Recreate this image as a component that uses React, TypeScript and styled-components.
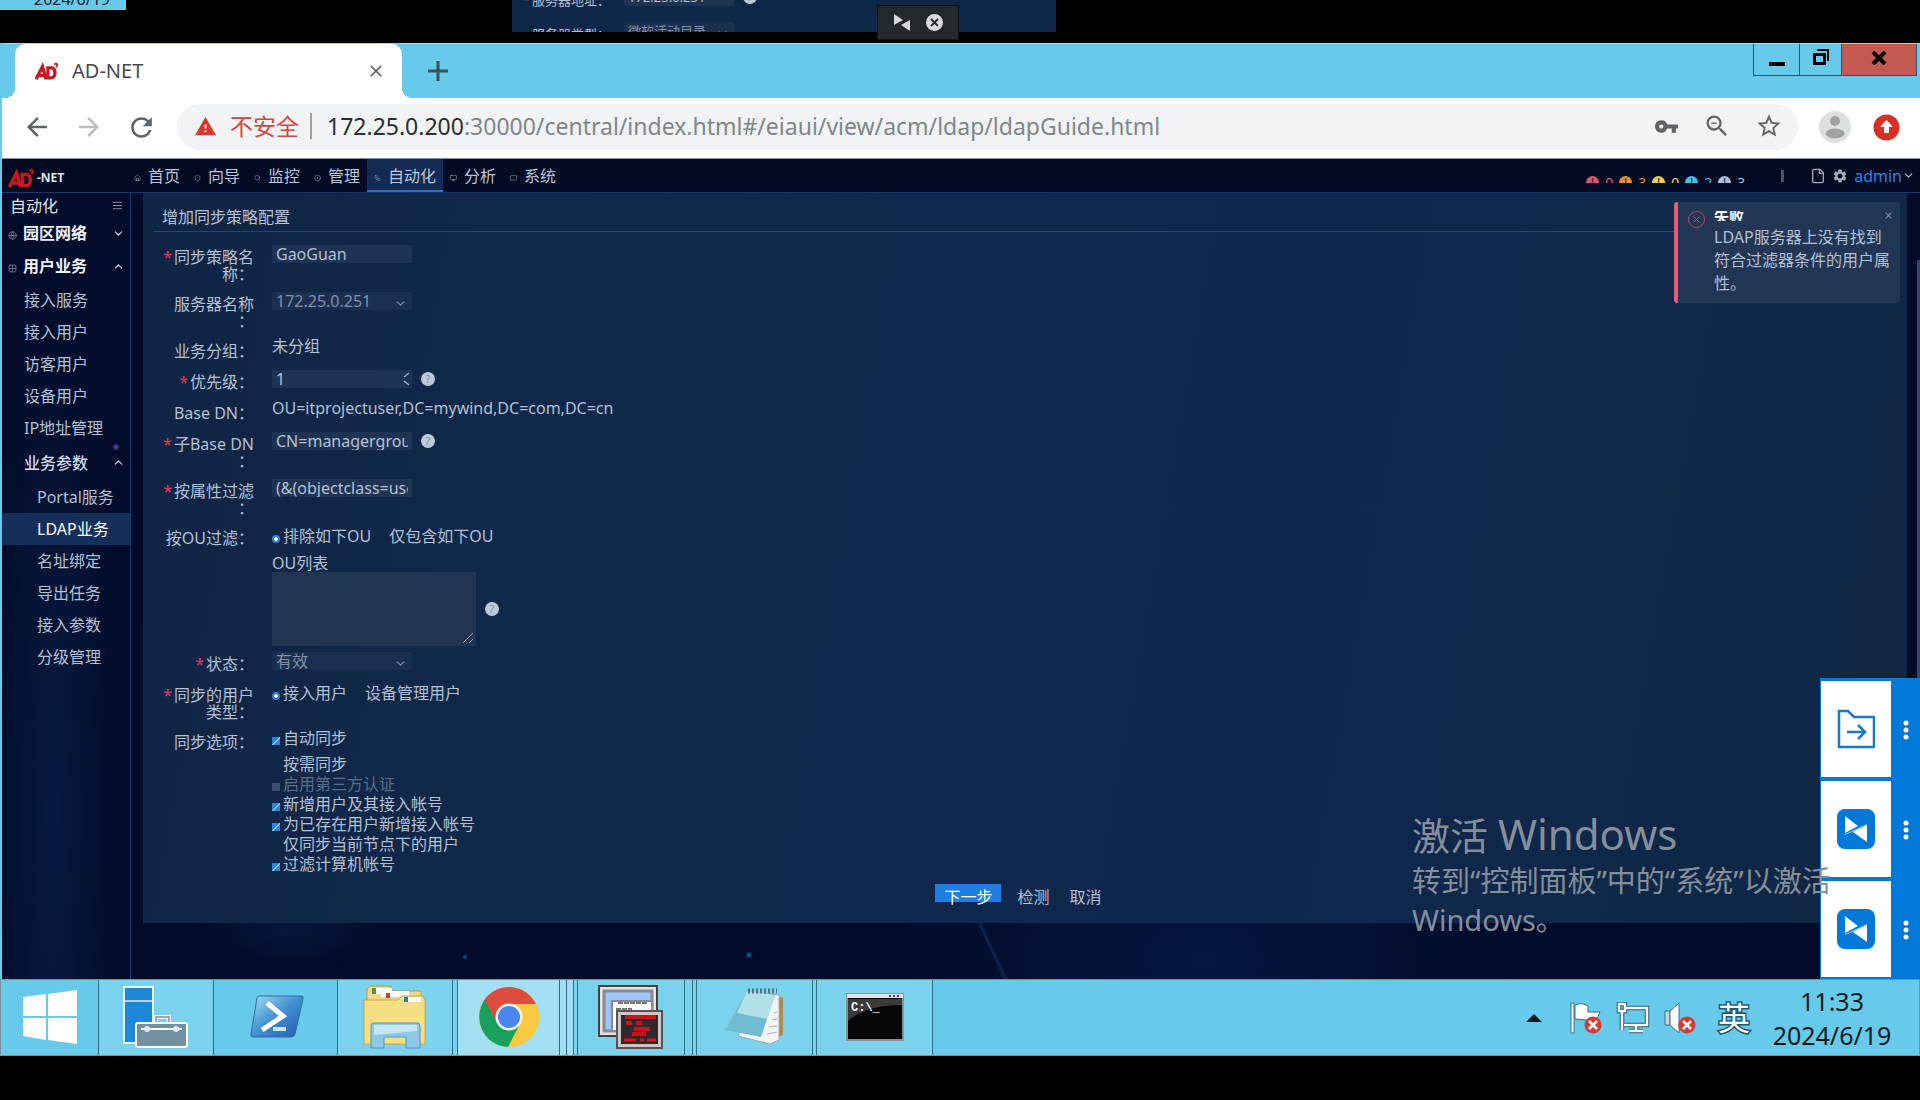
import React from "react";
import styled, { createGlobalStyle, css } from "styled-components";
import {
  MdArrowBack,
  MdArrowForward,
  MdRefresh,
  MdWarning,
  MdVpnKey,
  MdZoomOut,
  MdStarBorder,
  MdClose,
  MdSettings,
} from "react-icons/md";
import { ChevronDown, ChevronUp, File, House, Shield, Monitor, CircleDot, Workflow, MessageSquare, Search, Globe, Grid2x2, AlignJustify } from "lucide-react";

const sky = "#67caea";
const edge = "#2b6f86";
const ink = "#b4c0d4";

const GlobalStyle = createGlobalStyle`
  * { box-sizing: border-box; }
  body {
    margin: 0;
    background: #000;
    font-family: "Noto Sans", "Noto Sans CJK SC", sans-serif;
    font-size: 16px;
    line-height: 18px;
  }
  button, input, select, textarea { font: inherit; color: inherit; border: 0; border-radius: 0; margin: 0; padding: 0; background: none; }
  a { color: inherit; text-decoration: none; }
  svg { display: block; flex: none; }
`;

const Desktop = styled.div`
  min-height: 100vh;
  display: flex;
  flex-direction: column;
  background: #000;
  overflow: hidden;
`;

/* ---------- browser chrome ---------- */
const Browser = styled.div`
  flex: 1;
  display: flex;
  flex-direction: column;
  border-left: 2px solid ${sky};
  background: #fff;
`;
const TabStrip = styled.div`
  display: flex;
  height: 55px;
  padding-left: 13px;
  background: ${sky};
  border-top: 1px solid #93dcf3;
`;
const Tab = styled.div`
  position: relative;
  width: 387px;
  display: flex;
  align-items: center;
  padding: 0 16px 0 19px;
  border-radius: 10px 10px 0 0;
  background: #fff;
  color: #45494d;
  font-size: 20px;
  &::before, &::after {
    content: "";
    position: absolute;
    bottom: 0;
    width: 10px;
    height: 10px;
  }
  &::before { left: -10px; background: radial-gradient(circle at 0 0, transparent 10px, #fff 10px); }
  &::after { right: -10px; background: radial-gradient(circle at 100% 0, transparent 10px, #fff 10px); }
`;
const TabTitle = styled.span`
  flex: 1;
  margin-left: 12px;
`;
const IconButton = styled.button<{ $color?: string }>`
  display: flex;
  align-items: center;
  justify-content: center;
  color: ${(p) => p.$color ?? "#5f6368"};
`;
const NewTab = styled(IconButton)`
  margin-left: 26px;
  padding-bottom: 1px;
`;
const WindowButtons = styled.div`
  display: flex;
  margin-left: auto;
  margin-right: 3px;
  height: 32px;
  border: 1px solid #1c5a70;
  border-top: 0;
`;
const WindowButton = styled.button<{ $w: number; $close?: boolean }>`
  width: ${(p) => p.$w}px;
  display: flex;
  align-items: center;
  justify-content: center;
  padding-bottom: 4px;
  background: ${(p) => (p.$close ? "#c35a51" : sky)};
  & + & { border-left: 1px solid #1c5a70; }
`;
const Toolbar = styled.div`
  display: flex;
  align-items: center;
  height: 61px;
  padding: 0 20px 2px;
  border-bottom: 1px solid #8b8f96;
`;
const NavTools = styled.div`
  display: flex;
  gap: 22px;
`;
const Omnibox = styled.div`
  flex: 1;
  height: 46px;
  display: flex;
  align-items: center;
  margin: 0 21px 0 20px;
  padding: 0 15px 2px 17px;
  border-radius: 23px;
  background: #f1f3f4;
  font-size: 23px;
  line-height: 30px;
  color: #80868b;
`;
const Insecure = styled.span`
  margin-left: 13px;
  color: #d8453c;
`;
const Bar = styled.span`
  width: 2px;
  height: 26px;
  margin: 0 15px 0 11px;
  background: #9a9fa4;
`;
const Address = styled.span`
  flex: 1;
  white-space: nowrap;
  b { font-weight: 400; color: #2a2d31; }
`;
const OmniTools = styled.div`
  display: flex;
  gap: 24px;
`;
const ProfileTools = styled.div`
  display: flex;
  align-items: center;
  gap: 22px;
`;

/* ---------- web application ---------- */
const AppArea = styled.div`
  position: relative;
  flex: 1;
  display: flex;
  flex-direction: column;
  color: ${ink};
  background:
    linear-gradient(65deg, transparent 49%, rgba(40, 90, 150, 0.3) 50%, transparent 52%) 900px 100% / 180px 56px no-repeat,
    radial-gradient(circle at 463px 798px, #1c5f96 0, transparent 3px),
    radial-gradient(circle at 747px 796px, #1c6a98 0, transparent 4px),
    radial-gradient(ellipse at 290px 770px, rgba(16, 62, 120, 0.25) 0, transparent 90px),
    radial-gradient(ellipse at 1200px 800px, rgba(10, 50, 110, 0.3) 0, transparent 320px),
    #020b2a;
`;
const AppNav = styled.nav`
  display: flex;
  height: 34px;
  align-items: stretch;
  padding: 0 5px 0 4px;
  background: #020a24;
  border-bottom: 1px solid #16386f;
`;
const Brand = styled.a`
  display: flex;
  width: 121px;
  align-items: center;
  color: #dfe4ee;
  font-size: 12px;
  font-weight: 700;
  padding-top: 4px;
`;
const NavLink = styled.a<{ $active?: boolean }>`
  display: flex;
  align-items: center;
  gap: 7px;
  padding: 0 7px;
  color: #bcc6d8;
  white-space: nowrap;
  svg { width: 7px; color: #8d98b0; margin-top: 5px; }
  ${(p) =>
    p.$active &&
    css`
      background: #132a55;
      box-shadow: inset 0 -2px 0 #2a72c8;
    `}
`;
const NavRight = styled.div`
  display: flex;
  align-items: center;
  margin-left: auto;
`;
const Alarms = styled.div`
  display: flex;
  gap: 6px;
  height: 7px;
  margin: 7px 36px 0 0;
  overflow: hidden;
`;
const Alarm = styled.span<{ $c: string }>`
  display: flex;
  width: 27px;
  gap: 6px;
  color: ${(p) => p.$c};
  font-size: 14px;
  line-height: 14px;
  &::before {
    content: "!";
    width: 14px;
    height: 14px;
    border-radius: 7px;
    background: ${(p) => p.$c};
    color: #16284a;
    font-size: 12px;
    text-align: center;
  }
`;
const NavRule = styled.span`
  width: 3px;
  height: 12px;
  margin-right: 26px;
  background: #46526c;
`;
const UserButton = styled(IconButton)`
  margin-left: 6px;
`;

const AppBody = styled.div`
  flex: 1;
  display: flex;
`;
const Sidebar = styled.aside`
  width: 129px;
  flex: none;
  border-right: 1px solid #16386f;
  background:
    radial-gradient(ellipse at 50px 620px, rgba(14, 50, 100, 0.4) 0, transparent 70px),
    radial-gradient(circle at 114px 254px, #6b4fb0 0, transparent 4px),
    #020b29;
`;
const SideHead = styled.div`
  display: flex;
  align-items: center;
  justify-content: space-between;
  height: 25px;
  padding: 0 7px 0 8px;
  color: #dfe6f2;
`;
const SideGroup = styled.button<{ $h: number; $sub?: boolean }>`
  display: flex;
  align-items: center;
  width: 100%;
  height: ${(p) => p.$h}px;
  padding: 0 5px 0 ${(p) => (p.$sub ? 22 : 6)}px;
  gap: 6px;
  font-weight: ${(p) => (p.$sub ? 500 : 700)};
  color: ${(p) => (p.$sub ? "#cfd8e6" : "#eef2f8")};
  span { flex: 1; text-align: left; white-space: nowrap; }
  span + svg { color: #cfd8e6; }
  svg:first-child { margin-top: 4px; color: #77839c; }
`;
const SideLink = styled.a<{ $deep?: boolean; $active?: boolean }>`
  display: flex;
  align-items: center;
  height: 32px;
  padding-left: ${(p) => (p.$deep ? 35 : 22)}px;
  color: ${(p) => (p.$active ? "#fff" : ink)};
  background: ${(p) => (p.$active ? "#14305a" : "none")};
  white-space: nowrap;
`;

const Panel = styled.main`
  flex: 1;
  margin: 0 13px 56px 12px;
  padding: 0 10px;
  background: linear-gradient(100deg, #0f2546, #10294a 30%, #0f274d 60%, #102845);
`;
const PanelTitle = styled.h1`
  margin: 0 0 13px;
  height: 39px;
  padding: 15px 9px 0;
  border-bottom: 1px solid #1f4680;
  font-size: 16px;
  line-height: 18px;
  font-weight: 400;
`;
const Row = styled.div<{ $tight?: boolean }>`
  display: flex;
  align-items: flex-start;
  gap: 18px;
  min-height: 22px;
  margin-bottom: ${(p) => (p.$tight ? 6 : 9)}px;
`;
const LabelText = styled.label`
  width: 101px;
  flex: none;
  padding-top: 4px;
  text-align: right;
  line-height: 17px;
  white-space: pre;
`;
const Star = styled.i`
  margin-right: 2px;
  font-style: normal;
  color: #e5375c;
`;
const Field = styled.div<{ $column?: boolean }>`
  display: flex;
  flex-direction: ${(p) => (p.$column ? "column" : "row")};
  align-items: ${(p) => (p.$column ? "flex-start" : "center")};
  gap: ${(p) => (p.$column ? 0 : 9)}px;
  line-height: 18px;
`;
const Value = styled.span`
  line-height: 14px;
`;
const TextInput = styled.input`
  width: 140px;
  height: 18px;
  padding: 0 4px;
  background: #1f3455;
  line-height: 18px;
`;
const SelectWrap = styled.span`
  position: relative;
  display: block;
  color: #8290a8;
  svg { position: absolute; right: 5px; top: 5px; pointer-events: none; }
`;
const Select = styled.select`
  display: block;
  appearance: none;
  width: 140px;
  height: 18px;
  padding: 0 4px;
  background: #1b3051;
`;
const NumberWrap = styled.span`
  display: flex;
  align-items: center;
  background: #1f3455;
  ${TextInput} { width: 128px; appearance: textfield; background: none; }
`;
const Help = styled.button`
  width: 14px;
  height: 14px;
  border-radius: 7px;
  background: #bccadb;
  color: #7e8da6;
  font-size: 11px;
  line-height: 14px;
`;
const TextArea = styled.textarea`
  display: block;
  width: 204px;
  height: 74px;
  background: #223654;
  resize: none;
`;
const AreaWrap = styled.div`
  position: relative;
  display: flex;
  align-items: center;
  gap: 9px;
`;
const Grip = styled.svg`
  position: absolute;
  left: 190px;
  bottom: 2px;
`;
const ListLabel = styled.label`
  margin: 8px 0 0;
`;
const Choice = styled.label<{ $off?: boolean; $first?: boolean }>`
  display: flex;
  align-items: center;
  gap: 3px;
  line-height: ${(p) => (p.$first ? 16 : 20)}px;
  margin-bottom: ${(p) => (p.$first ? 8 : 0)}px;
  opacity: ${(p) => (p.$off ? 0.45 : 1)};
  input {
    appearance: none;
    width: 8px;
    height: 8px;
    margin-top: 6px;
  }
  input[type="radio"] { border-radius: 50%; }
  input[type="radio"]:checked { background: radial-gradient(circle, #fff 0 2px, #2b83e0 2px); }
  input[type="checkbox"]:checked { background: linear-gradient(135deg, #2b83e0 48%, #8fc3f5 49% 58%, #2b83e0 59%); }
  input:disabled { background: #6b7b97; }
`;
const Choices = styled.div`
  display: flex;
  gap: 7px;
  height: 20px;
`;
const Actions = styled.div`
  display: flex;
  justify-content: center;
  gap: 12px;
  padding: 1px 9px 0 0;
`;
const Action = styled.button<{ $primary?: boolean }>`
  height: 18px;
  padding: 0 ${(p) => (p.$primary ? 9 : 4)}px;
  line-height: 26px;
  white-space: nowrap;
  color: ${(p) => (p.$primary ? "#fff" : ink)};
  background: ${(p) => (p.$primary ? "#1f7fe0" : "none")};
`;
const ScrollThumb = styled.div`
  position: absolute;
  right: 0;
  top: 101px;
  width: 3px;
  height: 420px;
  background: #33456a;
`;
const Toast = styled.section`
  position: absolute;
  right: 20px;
  top: 43px;
  width: 226px;
  display: flex;
  gap: 9px;
  padding: 9px 6px 8px 10px;
  border-left: 4px solid #ea5a70;
  border-radius: 3px;
  background: #223756;
  line-height: 23px;
`;
const ToastTitle = styled.div`
  height: 10px;
  margin-bottom: 5px;
  overflow: hidden;
  font-weight: 700;
  font-size: 15px;
  line-height: 10px;
  color: #fff;
`;
const ToastClose = styled(IconButton)`
  position: absolute;
  right: 6px;
  top: 8px;
`;
const Watermark = styled.div`
  position: absolute;
  z-index: 3;
  right: 84px;
  bottom: 40px;
  width: 424px;
  color: #858f9c;
  font-size: 29px;
  line-height: 39px;
  white-space: nowrap;
  pointer-events: none;
`;
const WatermarkTitle = styled.div`
  font-size: 38px;
  line-height: 52px;
  span { font-size: 42px; }
`;
const Dock = styled.div`
  position: absolute;
  right: 0;
  bottom: 0;
  width: 100px;
  display: flex;
  flex-direction: column;
  gap: 4px;
  padding: 3px 0 2px 1px;
  background: #0078d7;
`;
const DockItem = styled.div`
  display: flex;
  gap: 12px;
  height: 96px;
`;
const DockButton = styled(IconButton)`
  width: 70px;
  background: #fff;
`;

/* ---------- strip above the window ---------- */
const TopStrip = styled.header`
  position: relative;
  display: flex;
  align-items: flex-start;
  height: 43px;
  flex: none;
`;
const DateScrap = styled.div`
  width: 126px;
  height: 10px;
  border: solid #a5bcc4;
  border-width: 0 1px 1px 0;
  background: ${sky};
  overflow: hidden;
  padding-left: 34px;
  color: #123;
  font-size: 16px;
  span { display: block; margin-top: -10px; }
`;
const PeekPanel = styled.div`
  width: 544px;
  height: 32px;
  margin-left: 386px;
  overflow: hidden;
  background: #0f2748;
  color: ${ink};
  font-size: 13px;
  ${LabelText} { width: 98px; }
  ${TextInput}, ${Select} { width: 110px; }
`;
const PeekRows = styled.div`
  display: flex;
  flex-direction: column;
  gap: 12px;
  margin-top: -12px;
`;
const PeekRow = styled.div`
  display: flex;
  align-items: flex-start;
  gap: 14px;
  height: 22px;
`;
const PeekTools = styled.div`
  position: absolute;
  left: 877px;
  top: 5px;
  width: 82px;
  height: 35px;
  display: flex;
  align-items: center;
  justify-content: center;
  gap: 16px;
  background: #25282c;
  border: 1px solid #101214;
`;

/* ---------- taskbar ---------- */
const Taskbar = styled.footer`
  display: flex;
  height: 77px;
  margin-bottom: 44px;
  border: 1px solid #75929c;
  background: ${sky};
`;
const TaskButton = styled.button<{ $w: number; $lit?: boolean; $plain?: boolean }>`
  display: flex;
  align-items: center;
  justify-content: center;
  width: ${(p) => p.$w}px;
  border-right: 1px solid ${edge};
  padding-bottom: 1px;
  background: ${(p) => (p.$lit ? "#a2dff2" : p.$plain ? sky : "#7ad2ec")};
`;
const Divider = styled.span<{ $w: number; $lit?: boolean }>`
  width: ${(p) => p.$w}px;
  border-right: 1px solid ${edge};
  background: ${(p) => (p.$lit ? "#a2dff2" : "#7ad2ec")};
`;
const Tray = styled.div`
  display: flex;
  align-items: center;
  margin-left: auto;
  padding-right: 24px;
`;
const TrayIcons = styled.div`
  display: flex;
  align-items: center;
  gap: 14px;
  margin: 0 19px 0 28px;
`;
const Ime = styled.button`
  margin-left: 8px;
  font-size: 32px;
  line-height: 40px;
  color: #fff;
  -webkit-text-stroke: 3px #24586c;
  paint-order: stroke fill;
`;
const Clock = styled.time`
  width: 126px;
  text-align: center;
  font-size: 25px;
  line-height: 34px;
  color: #0c1a20;
`;

const AdLogo = ({ w, h }: { w: number; h: number }) => (
  <svg width={w} height={h} viewBox="0 0 26 22" fill="none" stroke="#c8171e" strokeWidth="3.6">
    <path d="M1 20 8 6l4 14M4.500 16h8" />
    <path d="M14 7.500h4c5 0 5 11 0 11h-4z" />
    <path d="M21 4c2-2 4-1 3 1l-1 2" strokeWidth="1.800" />
  </svg>
);

const Bowtie = ({ tile }: { tile?: boolean }) =>
  tile ? (
    <svg width="38" height="40" viewBox="0 0 38 40">
      <rect width="38" height="40" rx="8" fill="#0078d7" />
      <path d="M8 25 30 15v2L8 26z" fill="#8dc1ee" />
      <path d="M8 7v17l13-7zM30 33V16l-14 7z" fill="#fff" />
    </svg>
  ) : (
    <svg width="16" height="17" viewBox="0 0 16 17" fill="#d7d9db">
      <path d="M0 0v11l9-5zM16 17V6l-9 5z" />
    </svg>
  );

const Dots = () => (
  <svg width="6" height="96" viewBox="0 0 6 96" fill="#fff">
    <circle cx="3" cy="42" r="2.500" />
    <circle cx="3" cy="49" r="2.500" />
    <circle cx="3" cy="56" r="2.500" />
  </svg>
);

const WindowsIcon = () => (
  <svg width="54" height="56" viewBox="0 0 54 56" fill="#fff">
    <path d="M0 8 23 5v22H0zM25 5 54 1v26H25zM0 29h23v22L0 47zM25 29h29v26l-29-4z" />
  </svg>
);
const ServerIcon = () => (
  <svg width="66" height="62" viewBox="0 0 66 62">
    <path d="M1 1h29v56H1z" fill="#1e88d8" stroke="#e6f6fc" strokeWidth="2" />
    <path d="M1 15h29" stroke="#d8effa" strokeWidth="1.500" />
    <path d="M33 37v-6h13v6" fill="none" stroke="#fff" strokeWidth="4" />
    <path d="M33 37v-6h13v6" fill="none" stroke="#6b8ea4" strokeWidth="1.500" />
    <rect x="13" y="37" width="51" height="24" rx="2" fill="#738fa2" stroke="#fff" strokeWidth="2" />
    <path d="M18 43h41" stroke="#fff" strokeWidth="2" />
    <circle cx="24" cy="43" r="3" fill="#dcecf4" />
    <circle cx="53" cy="43" r="3" fill="#dcecf4" />
  </svg>
);
const PowerShellIcon = () => (
  <svg width="56" height="44" viewBox="0 0 56 44">
    <defs>
      <linearGradient id="ps" x1="0" y1="0" x2="1" y2="1">
        <stop offset="0" stopColor="#a8dcf6" />
        <stop offset="0.500" stopColor="#3f8fce" />
        <stop offset="1" stopColor="#2458b4" />
      </linearGradient>
    </defs>
    <path d="M11 1h42q3 0 2 3l-8 35q-1 3-4 3H5q-3 0-2-3L9 3q0-2 2-2z" fill="url(#ps)" stroke="#2a6f9c" />
    <path d="m19 8 16 13-21 14" fill="none" stroke="#fff" strokeWidth="5" />
    <path d="M25 34h13" stroke="#cfe9fa" strokeWidth="4" />
  </svg>
);
const ExplorerIcon = () => (
  <svg width="64" height="64" viewBox="0 0 64 64">
    <path d="M4 4 7 1h20l3 5h28v12H4z" fill="#f0d98a" stroke="#b89a45" />
    <path d="M9 3h20v6H9z" fill="#fff" />
    <path d="M9 3h4v6H9z" fill="#4d9a3c" />
    <path d="M18 6h28v6H18z" fill="#fff" />
    <path d="M23 8h4v5h-4z" fill="#c8402c" />
    <path d="M1 15h34l4-4h21l2 5v43H1z" fill="#f6df83" stroke="#c7a64e" />
    <path d="M40 12h18v5H40z" fill="#fff" />
    <path d="M41 12h4v5h-4z" fill="#2a79b8" />
    <path d="M10 38h44q3 0 3 3v22H43V52H21v11H8V41q0-3 2-3z" fill="#8cc8e6" stroke="#4b96c2" />
    <path d="M11 40h43v6L11 50z" fill="#d3edf7" opacity="0.800" />
  </svg>
);
const ChromeIcon = () => (
  <svg width="60" height="60" viewBox="0 0 60 60">
    <circle cx="30" cy="30" r="30" fill="#fbc940" />
    <path d="M4 15A30 30 0 0 1 57 17H30L18 36z" fill="#de4b3f" />
    <path d="M5.500 13A30 30 0 0 0 29 60l12-23-23-1z" fill="#18a05c" />
    <path d="M30 60 41 37l3-20h13A30 30 0 0 1 30 60z" fill="#fbc940" />
    <circle cx="30" cy="30" r="13.500" fill="#f2f6fa" />
    <circle cx="30" cy="30" r="11" fill="#4a86f0" />
  </svg>
);
const TerminalsIcon = () => (
  <svg width="66" height="64" viewBox="0 0 66 64">
    <path d="M1 1h58v50H1z" fill="#e4e4e4" stroke="#4a3f42" strokeWidth="2" />
    <path d="M6 6h48v40H6z" fill="#9cc4fb" stroke="#8a8a8a" strokeWidth="3" />
    <path d="M14 16h40v30H14z" fill="#fff" stroke="#8a8a8a" strokeWidth="2" />
    <path d="M20 18h30M18 24h16" stroke="#777" strokeWidth="2" strokeDasharray="5 1" />
    <path d="M19 26h45v37H19z" fill="#c8c8c8" stroke="#5f5050" strokeWidth="2" />
    <path d="M23 30h37v29H23z" fill="#30282a" />
    <path d="M27 32h31M28 38h6m4 0h6M36 44h16M34 49h14" stroke="#c8141c" strokeWidth="4" />
    <path d="M26 55h12m4 0h4m3 0h9" stroke="#d8141c" strokeWidth="3" />
  </svg>
);
const NotepadIcon = () => (
  <svg width="60" height="58" viewBox="0 0 60 58">
    <path d="M50 7 58 10v37l-6 3z" fill="#b08a4c" />
    <path d="M24 4 54 7v45l-9 4-32-8z" fill="#f3f5f5" stroke="#9aa7aa" />
    <path d="M22 3 50 7 36 49 0 42z" fill="#6fbcd0" />
    <path d="M22 3 50 7l-8 24-30-6z" fill="#b3dfe6" />
    <path d="M23 3h29" stroke="#54707a" strokeWidth="5" strokeDasharray="2 2" />
    <path d="m42 46 10-2m-8-5 8-1m-5-6 5-1m-3-6 3-1" stroke="#aab4b8" />
  </svg>
);
const ConsoleIcon = () => (
  <svg width="58" height="48" viewBox="0 0 58 48">
    <path d="M1 1h56v46H1z" fill="#050505" stroke="#8a9196" strokeWidth="2" />
    <path d="M2 6h54v6Q20 12 2 28z" fill="#3b3b3b" />
    <path d="M1 1h56v4H1z" fill="#dfe3e6" />
    <path d="M43 3h10" stroke="#444" strokeWidth="2" strokeDasharray="2 2" />
    <text x="5" y="18" fill="#fff" fontSize="12" fontFamily="Liberation Mono, monospace" fontWeight="700">C:\_</text>
  </svg>
);
const ErrorBadge = () => (
  <>
    <circle cx="23" cy="23" r="8.500" fill="#d63a30" />
    <path d="m19 19 8 8m0-8-8 8" stroke="#fff" strokeWidth="2.500" />
  </>
);
const FlagIcon = () => (
  <svg width="32" height="32" viewBox="0 0 32 32">
    <path d="M1 1h3v30H1z" fill="#fff" stroke="#3c6f82" />
    <path d="M5 3q7-3 13 1v6h12l-3 7 2 4-12-3-12-1z" fill="#fff" stroke="#3c6f82" />
    <ErrorBadge />
  </svg>
);
const NetworkIcon = () => (
  <svg width="34" height="32" viewBox="0 0 34 32" fill="none">
    <path d="M10 6h21v17H8M20 23v5m-7 1h14M6 10v18M3 2h6v7H3z" stroke="#24586c" strokeWidth="4.500" />
    <path d="M10 6h21v17H8M20 23v5m-7 1h14M6 10v18M3 2h6v7H3z" stroke="#fff" strokeWidth="2.500" />
  </svg>
);
const SpeakerIcon = () => (
  <svg width="32" height="32" viewBox="0 0 32 32">
    <path d="M1 9h5v14H1z" fill="#ccd6da" stroke="#3c6f82" />
    <path d="M6 9 15 1v30l-9-8z" fill="#fff" stroke="#3c6f82" />
    <ErrorBadge />
  </svg>
);

const navItems = [
  { text: "首页", Icon: House },
  { text: "向导", Icon: Shield },
  { text: "监控", Icon: Search },
  { text: "管理", Icon: CircleDot },
  { text: "自动化", Icon: Workflow, active: true },
  { text: "分析", Icon: Monitor },
  { text: "系统", Icon: MessageSquare },
];
const alarms = [
  { c: "#e8506a", n: 0 },
  { c: "#f08a2c", n: 3 },
  { c: "#efd23e", n: 0 },
  { c: "#3fc3ea", n: 2 },
  { c: "#a9c0dc", n: 3 },
];
const syncOptions = [
  { text: "自动同步", on: true, first: true },
  { text: "按需同步" },
  { text: "启用第三方认证", off: true },
  { text: "新增用户及其接入帐号", on: true },
  { text: "为已存在用户新增接入帐号", on: true },
  { text: "仅同步当前节点下的用户" },
  { text: "过滤计算机帐号", on: true },
];

type RowProps = { label: string; htmlFor?: string; required?: boolean; tight?: boolean; column?: boolean; children: React.ReactNode };
const FormRow = ({ label, htmlFor, required, tight, column, children }: RowProps) => (
  <Row $tight={tight}>
    <LabelText htmlFor={htmlFor}>
      {required && <Star>*</Star>}
      {label}
    </LabelText>
    <Field $column={column}>{children}</Field>
  </Row>
);

const Dropdown = ({ id, value }: { id: string; value: string }) => (
  <SelectWrap>
    <Select id={id} defaultValue={value}>
      <option>{value}</option>
    </Select>
    <ChevronDown size={13} />
  </SelectWrap>
);

const SyncForm = () => (
  <form onSubmit={(e) => e.preventDefault()}>
    <FormRow label={"同步策略名\n称："} htmlFor="policy" required>
      <TextInput id="policy" defaultValue="GaoGuan" />
    </FormRow>
    <FormRow label={"服务器名称\n："} htmlFor="server">
      <Dropdown id="server" value="172.25.0.251" />
    </FormRow>
    <FormRow label="业务分组：">
      <Value>未分组</Value>
    </FormRow>
    <FormRow label="优先级：" htmlFor="priority" required>
      <NumberWrap>
        <TextInput id="priority" type="text" inputMode="numeric" defaultValue="1" />
        <svg width="12" height="18" viewBox="0 0 12 18" fill="none" stroke="#9aa8bf" strokeWidth="1.500">
          <path d="m4 7 5-4M4 11l5 4" />
        </svg>
      </NumberWrap>
      <Help type="button">?</Help>
    </FormRow>
    <FormRow label="Base DN：">
      <Value>OU=itprojectuser,DC=mywind,DC=com,DC=cn</Value>
    </FormRow>
    <FormRow label={"子Base DN\n："} htmlFor="subdn" required>
      <TextInput id="subdn" defaultValue="CN=managergroup" />
      <Help type="button">?</Help>
    </FormRow>
    <FormRow label={"按属性过滤\n："} htmlFor="filter" required>
      <TextInput id="filter" defaultValue="(&(objectclass=user))" />
    </FormRow>
    <FormRow label="按OU过滤：" tight column>
      <Choices>
        <Choice><input type="radio" name="ou" defaultChecked />排除如下OU</Choice>
        <Choice><input type="radio" name="ou" />仅包含如下OU</Choice>
      </Choices>
      <ListLabel htmlFor="oulist">OU列表</ListLabel>
      <AreaWrap>
        <TextArea id="oulist" />
        <Grip width="12" height="12" viewBox="0 0 12 12" stroke="#93a1b8" fill="none">
          <path d="M1 11 11 1M7 11l4-4" />
        </Grip>
        <Help type="button">?</Help>
      </AreaWrap>
    </FormRow>
    <FormRow label="状态：" htmlFor="state" required>
      <Dropdown id="state" value="有效" />
    </FormRow>
    <FormRow label={"同步的用户\n类型："} required>
      <Choices>
        <Choice><input type="radio" name="kind" defaultChecked />接入用户</Choice>
        <Choice><input type="radio" name="kind" />设备管理用户</Choice>
      </Choices>
    </FormRow>
    <FormRow label="同步选项：" column>
      {syncOptions.map((o) => (
        <Choice key={o.text} $off={o.off} $first={o.first}>
          <input type="checkbox" defaultChecked={o.on} disabled={o.off} />
          {o.text}
        </Choice>
      ))}
    </FormRow>
    <Actions>
      <Action $primary type="submit">下一步</Action>
      <Action type="button">检测</Action>
      <Action type="button">取消</Action>
    </Actions>
  </form>
);

export default function App() {
  return (
    <Desktop lang="zh-CN">
      <GlobalStyle />
      <TopStrip>
        <DateScrap><span>2024/6/19</span></DateScrap>
        <PeekPanel>
          <PeekRows>
            <PeekRow>
              <LabelText htmlFor="peek-address"><Star>*</Star>服务器地址：</LabelText>
              <Field>
                <TextInput id="peek-address" defaultValue="172.25.0.251" />
                <Help type="button">?</Help>
              </Field>
            </PeekRow>
            <PeekRow>
              <LabelText htmlFor="peek-type">服务器类型：</LabelText>
              <Dropdown id="peek-type" value="微软活动目录" />
            </PeekRow>
          </PeekRows>
        </PeekPanel>
        <PeekTools>
          <IconButton aria-label="expand"><Bowtie /></IconButton>
          <IconButton aria-label="dismiss">
            <svg width="17" height="17" viewBox="0 0 17 17">
              <circle cx="8.500" cy="8.500" r="8.500" fill="#d7d9db" />
              <path d="m5 5 7 7m0-7-7 7" stroke="#25282c" strokeWidth="1.800" />
            </svg>
          </IconButton>
        </PeekTools>
      </TopStrip>

      <Browser>
        <TabStrip>
          <Tab>
            <AdLogo w={26} h={20} />
            <TabTitle>AD-NET</TabTitle>
            <IconButton aria-label="close tab"><MdClose size={20} /></IconButton>
          </Tab>
          <NewTab aria-label="new tab" $color="#3f4f58">
            <svg width="20" height="20" viewBox="0 0 20 20" stroke="currentColor" strokeWidth="3">
              <path d="M10 0v20M0 10h20" />
            </svg>
          </NewTab>
          <WindowButtons>
            <WindowButton $w={45} aria-label="minimize">
              <svg width="16" height="20"><path d="M0 14h16v4H0z" /></svg>
            </WindowButton>
            <WindowButton $w={42} aria-label="restore">
              <svg width="16" height="17" fill="none" stroke="#000">
                <path d="M1.500 5.500h10v9h-10z" strokeWidth="3" />
                <path d="M4 1h11v11" strokeWidth="2" />
              </svg>
            </WindowButton>
            <WindowButton $w={75} $close aria-label="close">
              <svg width="16" height="14"><path d="m2 1 12 12M14 1 2 13" stroke="#000" strokeWidth="4" /></svg>
            </WindowButton>
          </WindowButtons>
        </TabStrip>
        <Toolbar>
          <NavTools>
            <IconButton aria-label="back"><MdArrowBack size={30} /></IconButton>
            <IconButton aria-label="forward" $color="#babcbe"><MdArrowForward size={30} /></IconButton>
            <IconButton aria-label="reload"><MdRefresh size={31} /></IconButton>
          </NavTools>
          <Omnibox>
            <MdWarning size={23} color="#d8372d" />
            <Insecure>不安全</Insecure>
            <Bar />
            <Address><b>172.25.0.200</b>:30000/central/index.html#/eiaui/view/acm/ldap/ldapGuide.html</Address>
            <OmniTools>
              <IconButton aria-label="passwords"><MdVpnKey size={25} /></IconButton>
              <IconButton aria-label="zoom"><MdZoomOut size={28} /></IconButton>
              <IconButton aria-label="bookmark"><MdStarBorder size={28} /></IconButton>
            </OmniTools>
          </Omnibox>
          <ProfileTools>
            <IconButton aria-label="profile">
              <svg width="32" height="32" viewBox="0 0 32 32" fill="#9fa1a3">
                <circle cx="16" cy="16" r="16" fill="#dedfe0" />
                <circle cx="16" cy="10" r="5" />
                <ellipse cx="16" cy="22.500" rx="9.500" ry="5" />
              </svg>
            </IconButton>
            <IconButton aria-label="update">
              <svg width="27" height="27" viewBox="0 0 27 27">
                <circle cx="13.500" cy="13.500" r="13" fill="#d93025" />
                <path d="m13.500 6 6.500 7h-4v6h-5v-6H7z" fill="#fff" />
              </svg>
            </IconButton>
          </ProfileTools>
        </Toolbar>

        <AppArea>
          <AppNav>
            <Brand href="#">
              <AdLogo w={31} h={22} />-NET
            </Brand>
            {navItems.map(({ text, Icon, active }) => (
              <NavLink key={text} href="#" $active={active}>
                <Icon size={8} />
                {text}
              </NavLink>
            ))}
            <NavRight>
              <Alarms>
                {alarms.map((a, i) => (
                  <Alarm key={i} $c={a.c}>{a.n}</Alarm>
                ))}
              </Alarms>
              <NavRule />
              <IconButton aria-label="documents" $color="#a5abb8"><File size={16} /></IconButton>
              <UserButton aria-label="settings" $color="#a5abb8"><MdSettings size={16} /></UserButton>
              <UserButton $color="#2f83dc">admin<ChevronDown size={13} color="#b4c0d4" /></UserButton>
            </NavRight>
          </AppNav>
          <AppBody>
            <Sidebar>
              <SideHead>自动化<AlignJustify size={11} color="#8a96ab" /></SideHead>
              <SideGroup $h={30}><Globe size={9} /><span>园区网络</span><ChevronDown size={13} /></SideGroup>
              <SideGroup $h={36}><Grid2x2 size={9} /><span>用户业务</span><ChevronUp size={13} /></SideGroup>
              {["接入服务", "接入用户", "访客用户", "设备用户", "IP地址管理"].map((t) => (
                <SideLink key={t} href="#">{t}</SideLink>
              ))}
              <SideGroup $h={37} $sub><span>业务参数</span><ChevronUp size={13} /></SideGroup>
              {["Portal服务", "LDAP业务", "名址绑定", "导出任务", "接入参数", "分级管理"].map((t) => (
                <SideLink key={t} href="#" $deep $active={t === "LDAP业务"}>{t}</SideLink>
              ))}
            </Sidebar>
            <Panel>
              <PanelTitle>增加同步策略配置</PanelTitle>
              <SyncForm />
            </Panel>
          </AppBody>
          <ScrollThumb />
          <Toast role="alert">
            <svg width="17" height="17" viewBox="0 0 17 17" fill="none" stroke="#c0436a">
              <circle cx="8.500" cy="8.500" r="8" />
              <path d="m5.500 5.500 6 6m0-6-6 6" />
            </svg>
            <div>
              <ToastTitle>失败</ToastTitle>
              LDAP服务器上没有找到符合过滤器条件的用户属性。
            </div>
            <ToastClose aria-label="close" $color="#8794ab"><MdClose size={11} /></ToastClose>
          </Toast>
          <Watermark>
            <WatermarkTitle>激活 <span>Windows</span></WatermarkTitle>
            转到“控制面板”中的“系统”以激活
            <br />
            Windows。
          </Watermark>
          <Dock>
            <DockItem>
              <DockButton aria-label="transfer">
                <svg width="38" height="40" viewBox="0 0 38 40" fill="none" stroke="#1a78c8" strokeWidth="2.500">
                  <path d="M2 2h9l6 6h20v30H2z" />
                  <path d="M10 23h18m-7-7 7 7-7 7" />
                </svg>
              </DockButton>
              <Dots />
            </DockItem>
            {[1, 2].map((n) => (
              <DockItem key={n}>
                <DockButton aria-label={"session " + n}><Bowtie tile /></DockButton>
                <Dots />
              </DockItem>
            ))}
          </Dock>
        </AppArea>
      </Browser>

      <Taskbar>
        <TaskButton $w={98} $plain aria-label="start"><WindowsIcon /></TaskButton>
        <TaskButton $w={115} aria-label="server manager"><ServerIcon /></TaskButton>
        <TaskButton $w={124} $plain aria-label="powershell"><PowerShellIcon /></TaskButton>
        <TaskButton $w={115} aria-label="explorer"><ExplorerIcon /></TaskButton>
        <Divider $w={5} />
        <TaskButton $w={102} $lit aria-label="chrome"><ChromeIcon /></TaskButton>
        <Divider $w={7} $lit />
        <Divider $w={7} $lit />
        <Divider $w={4} />
        <TaskButton $w={107} aria-label="remote sessions"><TerminalsIcon /></TaskButton>
        <Divider $w={8} />
        <Divider $w={4} />
        <TaskButton $w={116} aria-label="notepad"><NotepadIcon /></TaskButton>
        <Divider $w={4} />
        <TaskButton $w={116} aria-label="console"><ConsoleIcon /></TaskButton>
        <Tray>
          <IconButton aria-label="hidden icons">
            <svg width="16" height="8"><path d="m8 0 8 8H0z" fill="#101c22" /></svg>
          </IconButton>
          <TrayIcons>
            <FlagIcon />
            <NetworkIcon />
            <SpeakerIcon />
            <Ime>英</Ime>
          </TrayIcons>
          <Clock>11:33<br />2024/6/19</Clock>
        </Tray>
      </Taskbar>
    </Desktop>
  );
}
